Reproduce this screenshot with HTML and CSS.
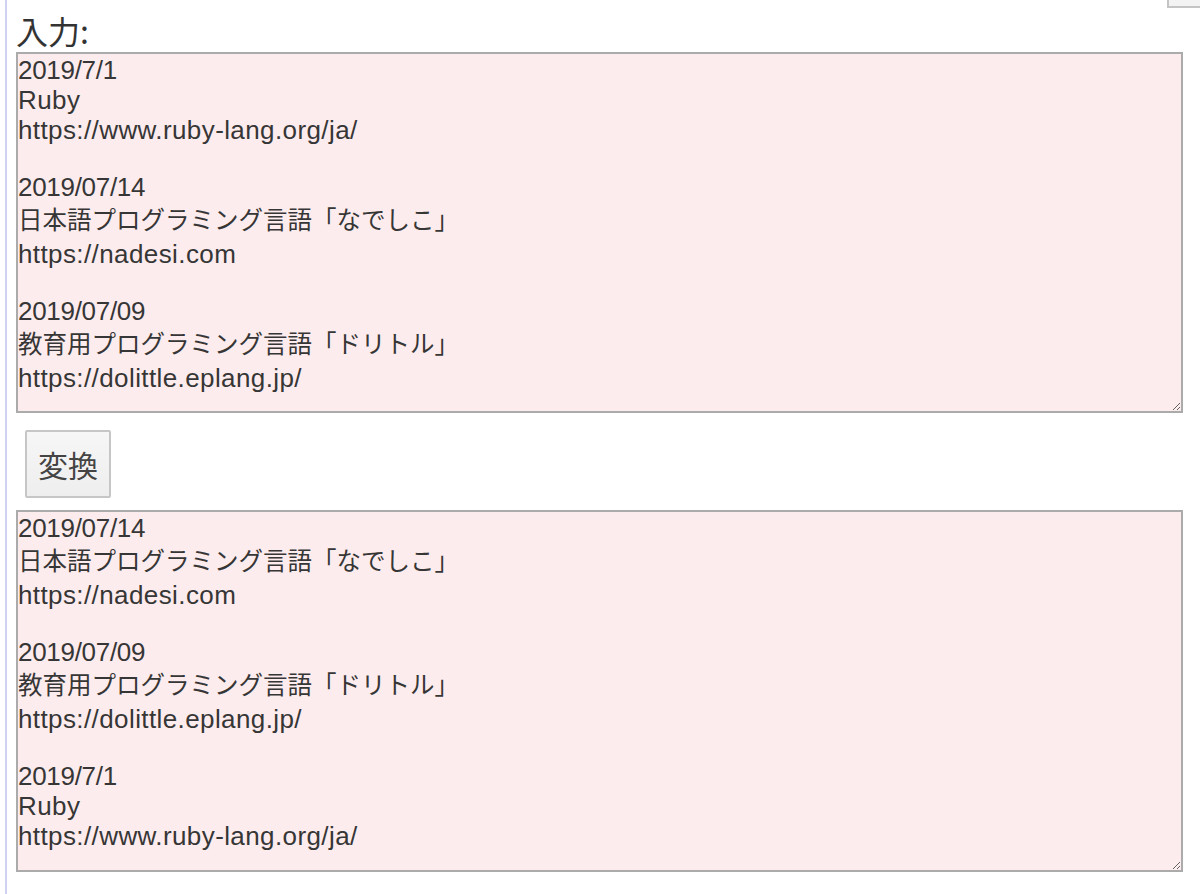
FILE: index.html
```html
<!DOCTYPE html>
<html lang="ja">
<head>
<meta charset="utf-8">
<title>変換</title>
<link rel="stylesheet" href="styles.css">
</head>
<body>
<div class="page">
  <div class="topbar"><span class="topbtn"></span></div>
  <label class="label">入力:</label>
  <div class="area area-in" role="textbox" aria-multiline="true">
    <div class="ln d">2019/7/1</div>
    <div class="ln">Ruby</div>
    <div class="ln">https://www.ruby-lang.org/ja/</div>
    <div class="gap"></div>
    <div class="ln d">2019/07/14</div>
    <div class="jp">日本語プログラミング言語「なでしこ」</div>
    <div class="ln">https://nadesi.com</div>
    <div class="gap"></div>
    <div class="ln d">2019/07/09</div>
    <div class="jp">教育用プログラミング言語「ドリトル」</div>
    <div class="ln">https://dolittle.eplang.jp/</div>
  </div>
  <button class="btn" type="button">変換</button>
  <div class="area area-out" role="textbox" aria-multiline="true">
    <div class="ln d">2019/07/14</div>
    <div class="jp">日本語プログラミング言語「なでしこ」</div>
    <div class="ln">https://nadesi.com</div>
    <div class="gap"></div>
    <div class="ln d">2019/07/09</div>
    <div class="jp">教育用プログラミング言語「ドリトル」</div>
    <div class="ln">https://dolittle.eplang.jp/</div>
    <div class="gap"></div>
    <div class="ln d">2019/7/1</div>
    <div class="ln">Ruby</div>
    <div class="ln">https://www.ruby-lang.org/ja/</div>
  </div>
</div>
</body>
</html>
```
FILE: styles.css
```css
html, body {
  margin: 0;
  padding: 0;
  background: #ffffff;
}
body {
  font-family: "Liberation Sans", "Noto Sans CJK JP", sans-serif;
  color: #333333;
  overflow: hidden;
}
.page {
  margin-left: 5px;
  border-left: 2px solid #cfd0f2;
  padding-left: 9px;
  min-height: 894px;
  box-sizing: border-box;
  display: flex;
  flex-direction: column;
  align-items: flex-start;
}
.topbar {
  align-self: stretch;
  height: 8px;
  display: flex;
  justify-content: flex-end;
}
.topbtn {
  width: 33px;
  height: 8px;
  box-sizing: border-box;
  border-left: 2px solid #c4c4c4;
  border-bottom: 2px solid #c4c4c4;
  background: #f3f3f3;
}
.label {
  display: block;
  font-family: "Noto Sans CJK JP", sans-serif;
  font-size: 32px;
  line-height: 40px;
  color: #333333;
  margin-top: 2px;
  margin-left: 0;
}
.area {
  box-sizing: border-box;
  width: 1167px;
  border: 2px solid #ababab;
  background: #fdeced;
  padding: 1px 2px 0 0;
  overflow: auto;
  resize: both;
  color: #363636;
}
.area-in {
  margin-top: 2px;
  height: 361px;
}
.area-out {
  height: 362px;
}
.ln {
  font-family: "Liberation Sans", sans-serif;
  font-size: 26px;
  line-height: 30px;
  height: 30px;
  letter-spacing: 0.4px;
  white-space: nowrap;
}
.ln.d {
  letter-spacing: -0.3px;
}
.jp {
  font-family: "Noto Sans CJK JP", sans-serif;
  font-size: 24.5px;
  line-height: 33px;
  height: 33px;
  padding-bottom: 4px;
  white-space: nowrap;
}
.gap {
  height: 27px;
}
.btn {
  margin: 17px 0 12px 9px;
  width: 86px;
  height: 68px;
  box-sizing: border-box;
  border: 2px solid #c6c6c6;
  border-radius: 2px;
  background: linear-gradient(#f6f6f6, #eeeeee);
  font-family: "Noto Sans CJK JP", sans-serif;
  font-size: 30px;
  color: #444444;
  padding: 0;
}
```
